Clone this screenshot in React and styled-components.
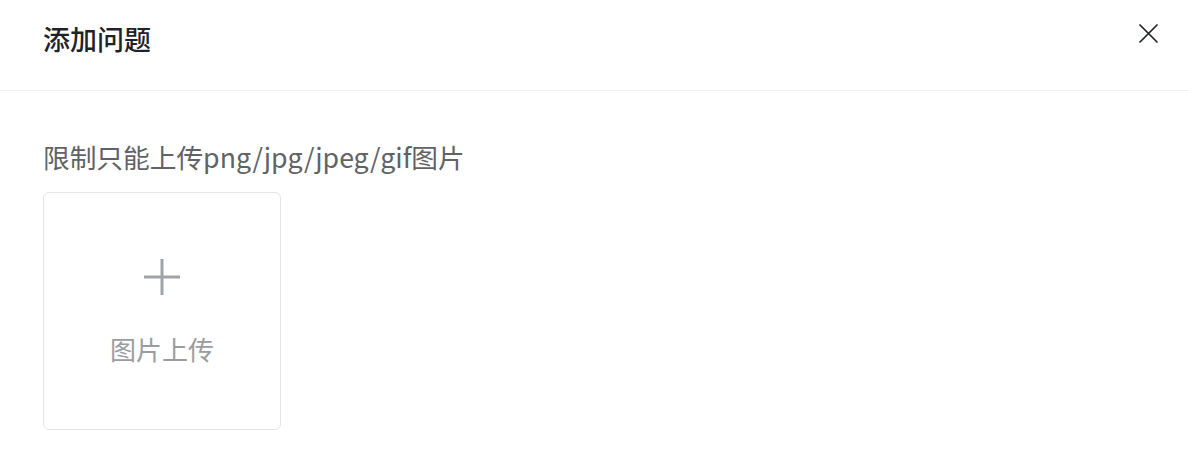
import styled, { createGlobalStyle } from 'styled-components'

const GlobalStyle = createGlobalStyle`
  body {
    margin: 0;
    background: #fff;
    font-family: "Noto Sans CJK SC", "Noto Sans", sans-serif;
  }
`;

const Dialog = styled.div`
  width: 1188px;
  height: 460px;
  background: #fff;
`;

const Header = styled.div`
  height: 91px;
  box-sizing: border-box;
  padding: 20px 30px 0 43px;
  display: flex;
  justify-content: space-between;
  align-items: flex-start;
  border-bottom: 1px solid #f0f0f0;
`;

const Title = styled.div`
  font-size: 27px;
  line-height: 38px;
  font-weight: 500;
  color: #1f2329;
`;

const CloseButton = styled.button`
  border: none;
  background: none;
  padding: 0;
  margin-top: 4px;
  width: 19px;
  height: 19px;
  cursor: pointer;
  display: flex;
`;

const Body = styled.div`
  padding: 48px 43px 0;
`;

const Label = styled.div`
  font-size: 26.7px;
  line-height: 36px;
  color: #606266;
`;

const UploadBox = styled.div`
  margin-top: 17px;
  width: 238px;
  height: 238px;
  box-sizing: border-box;
  border: 1px solid #e4e5e7;
  border-radius: 6px;
  display: flex;
  flex-direction: column;
  align-items: center;
  padding-top: 66px;
  cursor: pointer;
`;

const UploadText = styled.div`
  margin-top: 36px;
  font-size: 26px;
  line-height: 36px;
  color: #9a9ca1;
`;

function App() {
  return (
    <Dialog>
      <GlobalStyle />
      <Header>
        <Title>添加问题</Title>
        <CloseButton>
          <svg width="19" height="19" viewBox="0 0 19 19">
            <path d="M1 1 L18 18 M18 1 L1 18" stroke="#1f2329" strokeWidth="1.7" strokeLinecap="round" />
          </svg>
        </CloseButton>
      </Header>
      <Body>
        <Label>限制只能上传png/jpg/jpeg/gif图片</Label>
        <UploadBox>
          <svg width="36" height="36" viewBox="0 0 36 36">
            <path d="M18 0 V36 M0 18 H36" stroke="#a0a3a8" strokeWidth="3" />
          </svg>
          <UploadText>图片上传</UploadText>
        </UploadBox>
      </Body>
    </Dialog>
  )
}

export default App
